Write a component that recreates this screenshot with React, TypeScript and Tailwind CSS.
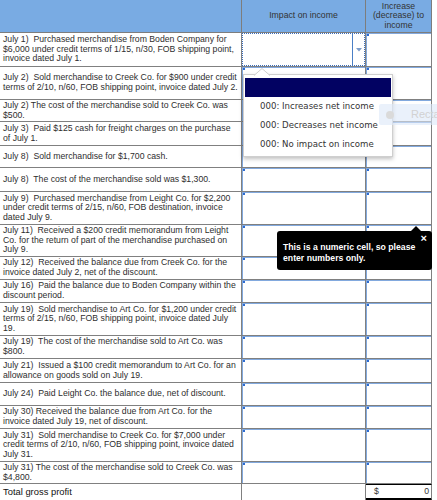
import React from "react";

type Row = { h: number; lines: string[] };

const rows: Row[] = [
  { h: 34, lines: ["July 1)  Purchased merchandise from Boden Company for", "$6,000 under credit terms of 1/15, n/30, FOB shipping point,", "invoice dated July 1."] },
  { h: 33, lines: ["July 2)  Sold merchandise to Creek Co. for $900 under credit", "terms of 2/10, n/60, FOB shipping point, invoice dated July 2."] },
  { h: 22, lines: ["July 2) The cost of the merchandise sold to Creek Co. was", "$500."] },
  { h: 24, lines: ["July 3)  Paid $125 cash for freight charges on the purchase", "of July 1."] },
  { h: 22, lines: ["July 8)  Sold merchandise for $1,700 cash."] },
  { h: 24, lines: ["July 8)  The cost of the merchandise sold was $1,300."] },
  { h: 33, lines: ["July 9)  Purchased merchandise from Leight Co. for $2,200", "under credit terms of 2/15, n/60, FOB destination, invoice", "dated July 9."] },
  { h: 32, lines: ["July 11)  Received a $200 credit memorandum from Leight", "Co. for the return of part of the merchandise purchased on", "July 9."] },
  { h: 23, lines: ["July 12)  Received the balance due from Creek Co. for the", "invoice dated July 2, net of the discount."] },
  { h: 23, lines: ["July 16)  Paid the balance due to Boden Company within the", "discount period."] },
  { h: 33, lines: ["July 19)  Sold merchandise to Art Co. for $1,200 under credit", "terms of 2/15, n/60, FOB shipping point, invoice dated July", "19."] },
  { h: 23, lines: ["July 19)  The cost of the merchandise sold to Art Co. was", "$800."] },
  { h: 24, lines: ["July 21)  Issued a $100 credit memorandum to Art Co. for an", "allowance on goods sold on July 19."] },
  { h: 23, lines: ["July 24)  Paid Leight Co. the balance due, net of discount."] },
  { h: 23, lines: ["July 30) Received the balance due from Art Co. for the", "invoice dated July 19, net of discount."] },
  { h: 33, lines: ["July 31)  Sold merchandise to Creek Co. for $7,000 under", "credit terms of 2/10, n/60, FOB shipping point, invoice dated", "July 31."] },
  { h: 22, lines: ["July 31) The cost of the merchandise sold to Creek Co. was", "$4,800."] },
];

const heights: Record<number, string> = {
  22: "h-[22px]",
  23: "h-[23px]",
  24: "h-[24px]",
  32: "h-[32px]",
  33: "h-[33px]",
  34: "h-[34px]",
};

function InputCell() {
  return (
    <div className="relative border-r border-b border-[#808080]">
      <div className="h-full border-t border-l border-[#82a9de]" />
      <span className="absolute left-[1px] top-[1px] w-[2px] h-[2px] bg-[#2d6bd0]" />
    </div>
  );
}

function SelectedCell() {
  return (
    <div className="relative border-r border-b border-[#808080] bg-white">
      <div className="h-full border border-dotted border-[#3a6fbf] flex justify-end">
        <div className="w-[12px] h-full border-l border-[#4a7fc6] flex items-center justify-center">
          <svg width="6" height="4" viewBox="0 0 6 4">
            <polygon points="0,0 6,0 3,3.5" fill="#7d9dcb" />
          </svg>
        </div>
      </div>
    </div>
  );
}

export default function App() {
  return (
    <div className="relative w-[437px] h-[500px] overflow-hidden bg-white font-['Liberation_Sans',Arial,sans-serif] text-[8.7px] text-[#2e2e2e]">
      <div className="grid grid-cols-[242px_124px_66px] w-[432px]">
        {/* header */}
        <div className="h-[33px] bg-[#79abe3] border-r border-b border-[#7d7d7d]" />
        <div className="h-[33px] bg-[#79abe3] border-r border-b border-[#7d7d7d] flex items-center justify-center text-[#333]">
          Impact on income
        </div>
        <div className="h-[33px] bg-[#79abe3] border-r border-b border-[#7d7d7d] flex flex-col items-center justify-center leading-[9.5px] text-[#333]">
          <span>Increase</span>
          <span>(decrease) to</span>
          <span>income</span>
        </div>

        {rows.map((r, i) => (
          <React.Fragment key={i}>
            <div
              className={`${heights[r.h]} border-r border-b border-[#808080] pl-[3px] flex flex-col justify-center leading-[9.6px] whitespace-pre overflow-hidden`}
            >
              {r.lines.map((l, j) => (
                <span key={j}>{l}</span>
              ))}
            </div>
            {i === 0 ? <SelectedCell /> : <InputCell />}
            <InputCell />
          </React.Fragment>
        ))}

        {/* total row */}
        <div className="h-[17px] border-r border-[#808080] pl-[3px] flex items-center text-[9.4px] text-[#111]">
          Total gross profit
        </div>
        <div className="h-[17px] border-r border-[#808080]" />
        <div className="h-[17px] border-r border-[#808080] border-t border-t-black border-b-[3px] border-b-black flex items-center justify-between pl-[8px] pr-[2px] text-[#333]">
          <span>$</span>
          <span>0</span>
        </div>
      </div>

      {/* dropdown popup */}
      <div className="absolute left-[243px] top-[74px] w-[150px] h-[83px] bg-white border border-[#cfcfcf] shadow-[0_2px_4px_rgba(0,0,0,0.25)] pt-[3px]">
        <div className="mx-[1px] h-[19px] bg-[#020262]" />
        {["000: Increases net income", "000: Decreases net income", "000: No impact on income"].map((t) => (
          <div
            key={t}
            className="h-[19px] flex items-center pl-[16px] font-['DejaVu_Sans',sans-serif] text-[8.6px] text-[#333] whitespace-pre"
          >
            {t}
          </div>
        ))}
      </div>
      <svg className="absolute left-[254px] top-[68px]" width="16" height="8" viewBox="0 0 16 8">
        <polyline points="0,7.5 8,0.5 16,7.5" fill="white" stroke="#cfcfcf" strokeWidth="1" />
        <rect x="1" y="7" width="14" height="2" fill="white" />
      </svg>

      {/* ghost tooltip */}
      <div className="absolute left-[379px] top-[104px] w-[90px] h-[21px] bg-[#dce8f8]/60 rounded-l-[2px] flex items-center">
        <span className="shrink-0 ml-[7px] w-[8px] h-[8px] rounded-full bg-[#dadada]" />
        <span className="shrink-0 ml-[17px] text-[11px] text-[#d2d2d2] whitespace-nowrap">Rectangle</span>
      </div>

      {/* numeric tooltip */}
      <svg className="absolute left-[410px] top-[226px]" width="12" height="6" viewBox="0 0 12 6">
        <polygon points="0,6 6,0 12,6" fill="black" />
      </svg>
      <div className="absolute left-[277px] top-[231px] w-[155px] h-[39px] bg-black rounded-[3px] text-white font-bold text-[8.7px] leading-[11px] pl-[6px] pt-[11px]">
        <div>This is a numeric cell, so please</div>
        <div>enter numbers only.</div>
        <span className="absolute right-[5px] top-[1px] text-[11px] leading-[12px] font-bold">×</span>
      </div>
    </div>
  );
}
